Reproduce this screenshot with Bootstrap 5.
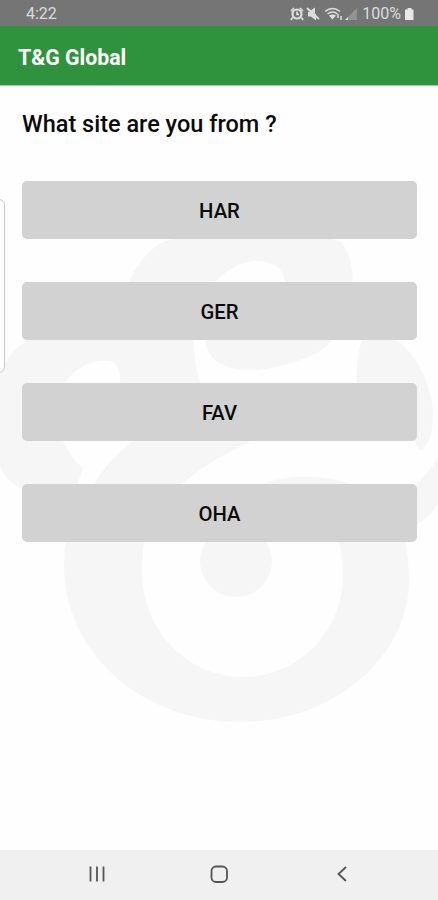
<!DOCTYPE html>
<html lang="en">
<head>
<meta charset="utf-8">
<meta name="viewport" content="width=device-width, initial-scale=1">
<title>T&amp;G Global</title>
<link href="https://cdn.jsdelivr.net/npm/bootstrap@5.3.0/dist/css/bootstrap.min.css" rel="stylesheet">
<style>
body { font-family: Roboto, sans-serif; background: #fefefe; color: #0c0c0c; }
.status-strip { height: 26px; background: #757575; color: #dcdcdc; font-size: 16px; line-height: 24px; padding: 2px 24px 0 26px; }
.status-strip svg { display: block; }
.level { font-size: 16px; }
.app-header { height: 60px; background: #2e933c; border-bottom: 1px solid #9ccba3; padding: 4px 18px 0; }
.app-title { font-size: 21.3px; font-weight: 700; color: #fff; line-height: 1; }
.site-area { padding: 23px 21px 0 22px; }
.question { font-size: 23.5px; font-weight: 500; line-height: 30px; margin-bottom: 42px; }
.site-list { gap: 43px; }
.site-btn { height: 58px; background: #d2d2d2; border: 0; border-radius: 5px; font-size: 20.3px; font-weight: 500; color: #0c0c0c; padding: 2px 0 0; }
.site-btn:hover { background: #c8c8c8; }
.watermark { position: absolute; left: 0; top: 0; z-index: -1; }
.edge-handle { position: absolute; left: -8px; top: 199px; width: 13px; height: 174px; border: 1px solid #c9c9c9; border-radius: 6px; background: #fff; }
.system-nav { height: 50px; background: #f0f0f0; }
.system-nav svg { display: block; }
</style>
<script src="https://cdn.jsdelivr.net/npm/bootstrap@5.3.0/dist/js/bootstrap.bundle.min.js"></script>
</head>
<body class="vh-100 overflow-hidden">
<div class="d-flex flex-column h-100 position-relative z-0">
  <svg class="watermark" width="438" height="850" viewBox="0 0 438 850" fill="#f6f6f6" aria-hidden="true">
    <path d="M125 290Q141 252 165 241Q250 220 340 241Q355 257 352 290H286Q286 262 258 261Q230 262 208 290Z"/>
    <path d="M206 335Q203 356 225 366Q251 376 290 363Q325 354 336 335Z"/>
    <path d="M26 341Q50 330 193 335Q194 366 202 390H120Q122 362 110 361C94 359 75 365 60 390V436Q71 459 83 468L76 488H20Q4 480 0 466V374Q7 354 26 341Z"/>
    <path d="M363 335H390C414 350 430 379 433 410Q434 441 421 450Q417 449 412 435L357 390Q355 360 363 335Z"/>
    <path d="M438 456Q430 473 410 490V530Q430 517 438 504Z"/>
    <path d="M141 436H265Q219 453 183 483L154 510Q142 536 142 570C142 630 187 677 243 677C300 677 343 630 343 575Q343 555 337 535L390 500Q409 535 409 580C409 657 334 722 240 722C143 722 64 654 64 565Q63 518 95 483Q110 456 141 436Z"/>
    <path d="M250 488Q300 467 355 485L400 530H250Z"/>
    <circle cx="236" cy="561" r="36"/>
  </svg>
  <div class="edge-handle"></div>
  <div class="status-strip d-flex justify-content-between align-items-center flex-shrink-0">
    <span>4:22</span>
    <div class="d-flex align-items-center">
      <svg width="70" height="16" viewBox="0 0 70 16" fill="none" stroke="#dedede" stroke-width="1.7">
        <circle cx="9" cy="8" r="4.500" stroke-width="2.200"/><path d="M9 5.500v2.800h2M3 5l3-3M15 5l-3-3M4.500 11.500 3 14M13.500 11.500l1.500 2.500"/>
        <path d="M20 5.500v5h3l5 4V8zM22 5l5-3.500v6z" fill="#dedede" stroke="none"/><path d="m19 2 12 11"/>
        <path d="M37 5.500Q44.500-.5 52 5.500M39.500 8q5-4 10 0" stroke-width="1.600"/><path d="m41 9.500 3.500 4 3.500-4q-3.500-2-7 0z" fill="#dedede" stroke="none"/>
        <path d="M50 8v4M53 10v4" stroke-width="1.500"/>
        <path d="M57 14 69 2v12z" fill="#929292" stroke="none"/><path d="m57 14 3-3v3z" fill="#dedede" stroke="none"/>
      </svg>
      <span class="level ms-1">100%</span>
      <svg class="ms-1" width="9" height="14" viewBox="0 0 9 14" fill="#e8e8e8"><path d="M2.500 1h4v1.500h2V13H0V2.500h2.500z"/></svg>
    </div>
  </div>
  <header class="app-header d-flex align-items-center flex-shrink-0"><h1 class="app-title mb-0">T&amp;G Global</h1></header>
  <main class="site-area flex-grow-1">
    <h2 class="question">What site are you from ?</h2>
    <div class="site-list d-grid">
      <button class="btn site-btn" type="button">HAR</button>
      <button class="btn site-btn" type="button">GER</button>
      <button class="btn site-btn" type="button">FAV</button>
      <button class="btn site-btn" type="button">OHA</button>
    </div>
  </main>
  <nav class="system-nav d-flex justify-content-center flex-shrink-0" aria-label="System">
    <svg width="438" height="50" viewBox="0 0 438 50" fill="none" stroke="#555" stroke-width="1.8">
      <path d="M90.500 16.500v15M97 16.500v15M103.500 16.500v15"/>
      <rect x="211.500" y="16.500" width="15.500" height="15.500" rx="4.500"/>
      <path d="m346 17-7.500 7 7.500 7"/>
    </svg>
  </nav>
</div>
</body>
</html>
